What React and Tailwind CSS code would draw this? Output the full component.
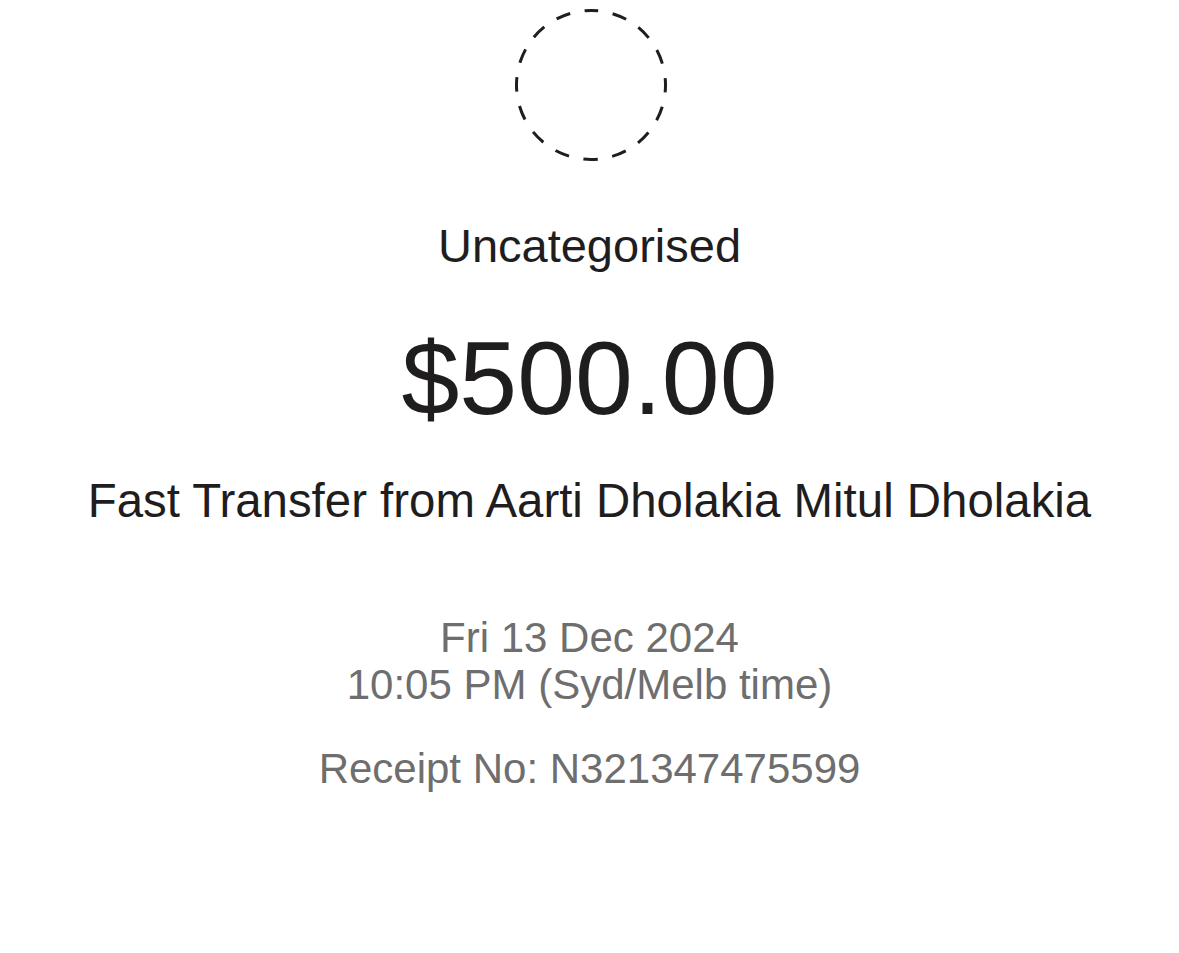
import React from "react";

const DashedCircle = () => (
  <svg width="156" height="156" viewBox="0 0 156 156" className="block">
    <circle
      cx="78"
      cy="78"
      r="74.5"
      fill="none"
      stroke="#1f1d1e"
      strokeWidth="3"
      strokeDasharray="14.6 14.66"
      strokeDashoffset="7.3"
      transform="rotate(-90 78 78)"
    />
  </svg>
);

const App = () => {
  return (
    <div
      className="min-h-screen bg-white flex flex-col items-center text-center"
      style={{ fontFamily: '"Liberation Sans", Arial, sans-serif' }}
    >
      {/* Category icon */}
      <div className="mt-[7px] ml-[3px]">
        <DashedCircle />
      </div>

      <div className="mt-[59px] text-[47px] leading-[47px] text-[#1f1d1e]">
        Uncategorised
      </div>

      <div className="mt-[58px] text-[104px] leading-[102px] text-[#1f1d1e]">
        $500.00
      </div>

      <div className="mt-[48px] text-[47.4px] leading-[47px] text-[#1f1d1e] whitespace-nowrap">
        Fast Transfer from Aarti Dholakia Mitul Dholakia
      </div>

      {/* Date + receipt */}
      <div className="mt-[90px] text-[42px] leading-[47px] text-[#6e6e6e]">
        <div>Fri 13 Dec 2024</div>
        <div>10:05 PM (Syd/Melb time)</div>
      </div>

      <div className="mt-[37px] text-[42px] leading-[47px] text-[#6e6e6e]">
        Receipt No: N321347475599
      </div>
    </div>
  );
};

export default App;
